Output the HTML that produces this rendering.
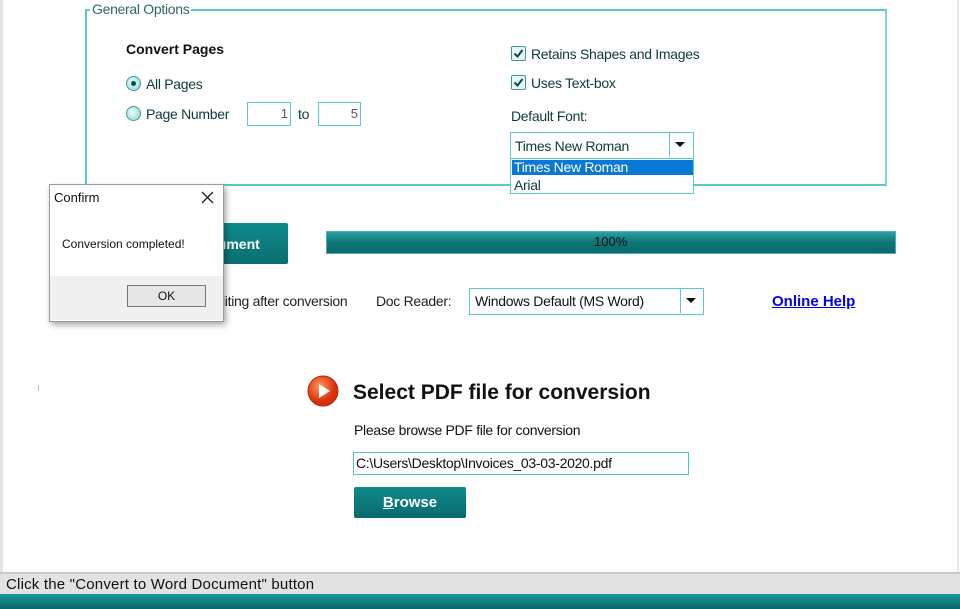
<!DOCTYPE html>
<html><head><meta charset="utf-8"><style>
body{margin:0;width:960px;height:609px;position:relative;background:#fff;font-family:"Liberation Sans",sans-serif;overflow:hidden;font-size:13px}
.a{position:absolute}
.t{color:#0d3b3b;letter-spacing:-0.3px}
.box{border:1px solid #5cc8cc;background:#fff}
.chk{width:13px;height:13px;border:1px solid #3a9a9a;border-radius:2px;background:#e8f6f6}
.rad{width:13px;height:13px;border:1px solid #3a9a9a;border-radius:50%;background:radial-gradient(circle at 40% 40%,#e8ffff,#8fcfd2)}
</style></head><body>
<div class="a" style="left:0;top:0;width:3px;height:572px;background:#e4e4e4"></div>
<div class="a" style="left:957px;top:0;width:2px;height:572px;background:#e6e6e6"></div>

<div class="a" style="left:85px;top:9px;width:798px;height:173px;border:2px solid #5cc8cc;border-right-color:#7fd4d6"></div>
<div class="a t" style="left:90px;top:1px;background:#fff;padding:0 2px;font-size:14px;color:#2a6a6a">General Options</div>
<div class="a" style="left:126px;top:41px;font-weight:bold;font-size:14px;color:#111">Convert Pages</div>
<div class="a rad" style="left:126px;top:76px"><div style="width:5px;height:5px;background:#0d4a4a;border-radius:50%;margin:4px"></div></div>
<div class="a t" style="left:146px;top:76px;font-size:14px">All Pages</div>
<div class="a rad" style="left:126px;top:106px"></div>
<div class="a t" style="left:146px;top:106px;font-size:14px">Page Number</div>
<div class="a box" style="left:247px;top:102px;width:40px;height:22px;text-align:right;line-height:22px;color:#555;padding-right:2px">1</div>
<div class="a t" style="left:298px;top:106px;font-size:14px">to</div>
<div class="a box" style="left:318px;top:102px;width:39px;height:22px;text-align:right;line-height:22px;color:#555;padding-right:2px">5</div>

<div class="a chk" style="left:511px;top:46px"><svg width="13" height="13"><path d="M2.5 6.5 L5.5 9.5 L10.5 3" stroke="#0d4a4a" stroke-width="2" fill="none"/></svg></div>
<div class="a t" style="left:531px;top:46px;font-size:14px">Retains Shapes and Images</div>
<div class="a chk" style="left:511px;top:75px"><svg width="13" height="13"><path d="M2.5 6.5 L5.5 9.5 L10.5 3" stroke="#0d4a4a" stroke-width="2" fill="none"/></svg></div>
<div class="a t" style="left:531px;top:75px;font-size:14px">Uses Text-box</div>
<div class="a t" style="left:511px;top:108px;font-size:14px">Default Font:</div>
<div class="a box" style="left:510px;top:132px;width:182px;height:25px"></div>
<div class="a t" style="left:515px;top:138px;font-size:14px">Times New Roman</div>
<div class="a" style="left:669px;top:133px;width:1px;height:24px;background:#5cc8cc"></div>
<div class="a" style="left:675px;top:142px;border-left:5px solid transparent;border-right:5px solid transparent;border-top:5px solid #111"></div>
<div class="a box" style="left:510px;top:158px;width:182px;height:34px"></div>
<div class="a" style="left:512px;top:160px;width:179px;height:15px;background:#0a78d7;color:#fff;font-size:14px;line-height:15px;padding-left:2px;letter-spacing:-0.3px">Times New Roman</div>
<div class="a t" style="left:514px;top:177px;font-size:14px">Arial</div>

<div class="a" style="left:200px;top:223px;width:88px;height:41px;background:linear-gradient(#0f8a8c,#0a6e70);border-radius:2px"></div>
<div class="a" style="left:210px;top:236px;color:#fff;font-weight:bold;font-size:14px">cument</div>
<div class="a" style="left:326px;top:231px;width:568px;height:21px;border:1px solid #5aa;background:linear-gradient(#2aa0a2,#0c7476 50%,#0a6c6e);"></div>
<div class="a" style="left:594px;top:234px;font-size:13px;color:#111">100%</div>

<div class="a" style="left:222px;top:293px;font-size:14px;color:#222;letter-spacing:-0.3px">liting after conversion</div>
<div class="a" style="left:376px;top:293px;font-size:14px;color:#222;letter-spacing:-0.3px">Doc Reader:</div>
<div class="a box" style="left:469px;top:288px;width:233px;height:25px"></div>
<div class="a" style="left:475px;top:293px;font-size:14px;color:#111;letter-spacing:-0.3px">Windows Default (MS Word)</div>
<div class="a" style="left:680px;top:289px;width:1px;height:24px;background:#5cc8cc"></div>
<div class="a" style="left:686px;top:298px;border-left:5px solid transparent;border-right:5px solid transparent;border-top:5px solid #111"></div>
<div class="a" style="left:772px;top:293px;font-size:15px;font-weight:bold;color:#0000ee;text-decoration:underline">Online Help</div>

<div class="a" style="left:38px;top:385px;width:1px;height:6px;background:#bbb"></div>
<svg class="a" style="left:307px;top:375px" width="32" height="32"><defs><radialGradient id="g" cx="40%" cy="35%"><stop offset="0" stop-color="#ff9a60"/><stop offset="1" stop-color="#d8300a"/></radialGradient></defs><circle cx="16" cy="16" r="15" fill="url(#g)" stroke="#b02808"/><path d="M12 9 L23 16 L12 23Z" fill="#fff"/></svg>
<div class="a" style="left:353px;top:381px;font-weight:bold;font-size:21px;color:#111">Select PDF file for conversion</div>
<div class="a" style="left:354px;top:422px;font-size:14px;color:#111;letter-spacing:-0.3px">Please browse PDF file for conversion</div>
<div class="a box" style="left:353px;top:452px;width:334px;height:21px;border-color:#4cc4c8"></div>
<div class="a" style="left:356px;top:455px;font-size:14px;color:#111;letter-spacing:-0.3px">C:\Users\Desktop\Invoices_03-03-2020.pdf</div>
<div class="a" style="left:354px;top:487px;width:112px;height:31px;background:linear-gradient(#0f8a8c,#0a6a6c);border-radius:2px;color:#fff;font-weight:bold;font-size:15px;text-align:center;line-height:31px"><u>B</u>rowse</div>

<div class="a" style="left:0;top:572px;width:960px;height:2px;background:#c8c8c8"></div>
<div class="a" style="left:0;top:574px;width:960px;height:20px;background:#e2e2e2"></div>
<div class="a" style="left:6px;top:576px;font-size:15px;color:#111;letter-spacing:0.2px">Click the "Convert to Word Document" button</div>
<div class="a" style="left:0;top:594px;width:960px;height:15px;background:linear-gradient(#1a9a9c,#0a6466)"></div>

<div class="a" style="left:49px;top:184px;width:173px;height:136px;background:#fff;border:1px solid #9a9a9a;box-shadow:2px 3px 6px rgba(0,0,0,.35)"></div>
<div class="a" style="left:54px;top:190px;font-size:13px;color:#111">Confirm</div>
<svg class="a" style="left:201px;top:191px" width="13" height="13"><path d="M1 1L12 12M12 1L1 12" stroke="#222" stroke-width="1.3"/></svg>
<div class="a" style="left:62px;top:237px;font-size:12px;color:#111">Conversion completed!</div>
<div class="a" style="left:50px;top:276px;width:173px;height:44px;background:#f0f0f0"></div>
<div class="a" style="left:127px;top:285px;width:79px;height:22px;border:1px solid #777;background:#e6e6e6;box-sizing:border-box;text-align:center;line-height:20px;font-size:12px;color:#111">OK</div>
</body></html>
